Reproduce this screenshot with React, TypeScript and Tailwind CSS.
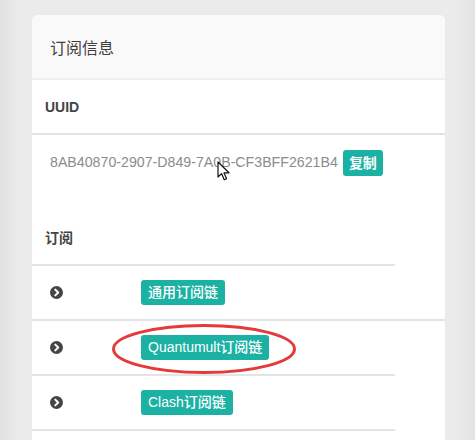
import React from "react";

const font = { fontFamily: '"Liberation Sans","Noto Sans CJK SC",sans-serif' };

function CircleArrow() {
  return (
    <svg width="13" height="13" viewBox="0 0 13 13">
      <circle cx="6.5" cy="6.5" r="6.5" fill="#454545" />
      <path d="M5.3 3.6 L8.2 6.5 L5.3 9.4" fill="none" stroke="#fff" strokeWidth="2" strokeLinecap="round" strokeLinejoin="round" />
    </svg>
  );
}

function LinkButton({ label }: { label: string }) {
  return (
    <span className="inline-flex h-[25px] items-center rounded-[3px] bg-[#1bb1a3] px-[7px] text-[14px] font-medium text-white">
      {label}
    </span>
  );
}

function Row({ label, full, circled }: { label: string; full?: boolean; circled?: boolean }) {
  return (
    <div>
      <div className="relative grid h-[53px] grid-cols-[109px_1fr] items-center">
        <div className="flex pl-[18px]">
          <CircleArrow />
        </div>
        <div>
          <LinkButton label={label} />
        </div>
        {circled && (
          <svg className="absolute left-[79px] top-[2px]" width="186" height="52" viewBox="0 0 186 52">
            <ellipse cx="93" cy="26" rx="90.5" ry="23.5" fill="none" stroke="#e53a3a" strokeWidth="3" />
          </svg>
        )}
      </div>
      <div className={full ? "h-[2px] w-full bg-[#e4e4e4]" : "h-[2px] w-[363px] bg-[#e4e4e4]"} />
    </div>
  );
}

export default function App() {
  return (
    <div
      className="h-[440px] w-[475px] overflow-hidden bg-[linear-gradient(to_right,#e0e0e0,#ebebeb_18px,#ebebeb_457px,#e2e2e2)] pl-[32px] pt-[15px]"
      style={font}
    >
      <div className="relative h-[425px] w-[413px] overflow-hidden rounded-t-[6px] bg-white">
        {/* header */}
        <div className="flex h-[65px] items-center border-b-2 border-[#eef0f3] bg-[#f9f9f9] px-[18px] pt-[4px] text-[16px] text-[#3f3f3f]">
          订阅信息
        </div>

        {/* UUID */}
        <div className="flex h-[55px] items-center border-b-2 border-[#e2e2e2] px-[13px] pt-[2px] text-[14px] font-semibold text-[#444]">
          UUID
        </div>
        <div className="flex h-[56px] items-center gap-[5px] pl-[18px] text-[14.2px] text-[#8c8c8c]">
          <span>8AB40870-2907-D849-7A0B-CF3BFF2621B4</span>
          <span className="inline-flex h-[26px] items-center rounded-[3px] bg-[#1bb1a3] px-[6px] text-[14px] font-bold text-white">
            复制
          </span>
        </div>

        {/* subscription */}
        <div className="flex h-[73px] items-end px-[13px] pb-[15px] text-[14px] font-semibold text-[#444]">
          订阅
        </div>
        <div className="h-[2px] w-[363px] bg-[#e4e4e4]" />
        <Row label="通用订阅链" full />
        <Row label="Quantumult订阅链" circled />
        <Row label="Clash订阅链" />

        {/* mouse pointer */}
        <svg className="absolute left-[185px] top-[146px]" width="14" height="21" viewBox="0 0 14 21">
          <path d="M1 1 L1 16 L4.6 12.6 L7.2 18.8 L9.6 17.8 L7 11.8 L12 11.8 Z" fill="#fff" stroke="#111" strokeWidth="1.2" strokeLinejoin="round" />
        </svg>
      </div>
    </div>
  );
}
